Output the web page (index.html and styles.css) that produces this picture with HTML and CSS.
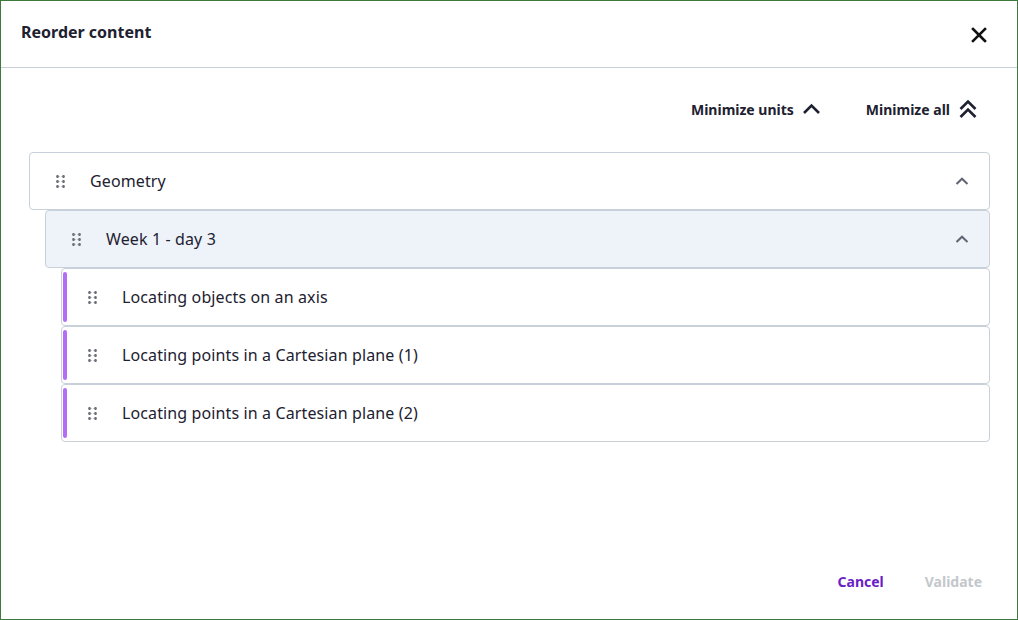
FILE: index.html
```html
<!DOCTYPE html>
<html lang="en">
<head>
	<meta charset="utf-8">
	<title>Reorder content</title>
	<link rel="stylesheet" href="styles.css">
</head>
<body>
<div class="dialog">
	<header class="dialog-header">
		<h1>Reorder content</h1>
		<button class="close" type="button" aria-label="Close">
			<svg width="16" height="16" viewBox="0 0 16 16"><path d="M2 2L14 14M14 2L2 14" stroke="#111" stroke-width="2.6" stroke-linecap="square"/></svg>
		</button>
	</header>

	<div class="toolbar">
		<button class="tool" type="button">Minimize units
			<svg width="19" height="12" viewBox="0 0 19 12"><path d="M2 10L9.5 2.5L17 10" fill="none" stroke="#1d2130" stroke-width="2.6"/></svg>
		</button>
		<button class="tool" type="button">Minimize all
			<svg width="20" height="20" viewBox="0 0 20 20"><path d="M2.5 10L10 2.5L17.5 10M2.5 18L10 10.5L17.5 18" fill="none" stroke="#1d2130" stroke-width="2.6"/></svg>
		</button>
	</div>

	<div class="tree">
		<div class="row level-0">
			<span class="handle"></span>
			<span class="label">Geometry</span>
			<span class="caret"></span>
		</div>
		<div class="row level-1">
			<span class="handle"></span>
			<span class="label">Week 1 - day 3</span>
			<span class="caret"></span>
		</div>
		<div class="row level-2">
			<span class="bar"></span>
			<span class="handle"></span>
			<span class="label">Locating objects on an axis</span>
		</div>
		<div class="row level-2">
			<span class="bar"></span>
			<span class="handle"></span>
			<span class="label">Locating points in a Cartesian plane (1)</span>
		</div>
		<div class="row level-2">
			<span class="bar"></span>
			<span class="handle"></span>
			<span class="label">Locating points in a Cartesian plane (2)</span>
		</div>
	</div>

	<footer class="dialog-footer">
		<button class="btn btn-cancel" type="button">Cancel</button>
		<button class="btn btn-validate" type="button" disabled>Validate</button>
	</footer>
</div>
</body>
</html>
```

FILE: styles.css
```css
html, body {
	margin: 0;
	padding: 0;
	background: #fff;
}

body {
	font-family: "Noto Sans", "Open Sans", sans-serif;
	color: #1d2130;
}

button {
	font-family: inherit;
	background: none;
	border: none;
	padding: 0;
	cursor: pointer;
}

.dialog {
	box-sizing: border-box;
	width: 1018px;
	height: 620px;
	border: 1px solid #3c7a3e;
	display: flex;
	flex-direction: column;
}

.dialog-header {
	height: 66px;
	border-bottom: 1px solid #c8ced6;
	display: flex;
	align-items: center;
	justify-content: space-between;
	padding: 0 30px 0 20px;
}

.dialog-header h1 {
	margin: 0 0 4px 0;
	font-size: 16px;
	font-weight: 700;
}

.close {
	display: flex;
	margin-top: 2px;
}

.toolbar {
	display: flex;
	justify-content: flex-end;
	gap: 45px;
	height: 40px;
	margin-top: 21px;
	padding-right: 39px;
}

.tool {
	display: flex;
	align-items: center;
	gap: 8px;
	font-size: 14px;
	font-weight: 700;
	color: #1d2130;
}

.tree {
	margin: 23px 27px 0 28px;
	display: flex;
	flex-direction: column;
}

.row {
	box-sizing: border-box;
	height: 58px;
	border: 1px solid #c8d0da;
	border-radius: 4px;
	display: flex;
	align-items: center;
	font-size: 16px;
	letter-spacing: 0.12px;
	background: #fff;
}

.level-0 {
	padding: 0 20px 0 26px;
}

.level-1 {
	margin-left: 16px;
	padding: 0 20px 0 26px;
	background: #eef3fa;
}

.level-2 {
	margin-left: 32px;
	padding: 0 20px 0 0;
}

.bar {
	align-self: stretch;
	width: 4px;
	margin: 3px 21px 3px 1px;
	border-radius: 2px;
	background: #b36ef6;
}

.handle {
	width: 9px;
	height: 13px;
	margin-right: 25px;
	background-image: radial-gradient(circle, #6b7078 1.4px, transparent 1.7px);
	background-size: 6px 5px;
	background-position: -1.5px -1px;
	flex-shrink: 0;
}

.label {
	flex: 1;
	margin-bottom: 1px;
}

.caret {
	width: 14px;
	height: 8px;
	background: no-repeat center / 14px 8px url("data:image/svg+xml;utf8,<svg xmlns='http://www.w3.org/2000/svg' width='14' height='8' viewBox='0 0 14 8'><path d='M1.5 7L7 1.7L12.5 7' fill='none' stroke='%235f6570' stroke-width='2'/></svg>");
}

.dialog-footer {
	margin-top: auto;
	height: 40px;
	padding: 0 35px 18px 0;
	display: flex;
	justify-content: flex-end;
	align-items: center;
	gap: 41px;
}

.btn {
	font-size: 14px;
	font-weight: 700;
}

.btn-cancel {
	color: #6a1ec6;
}

.btn-validate {
	color: #c3c7cc;
	cursor: default;
}
```
